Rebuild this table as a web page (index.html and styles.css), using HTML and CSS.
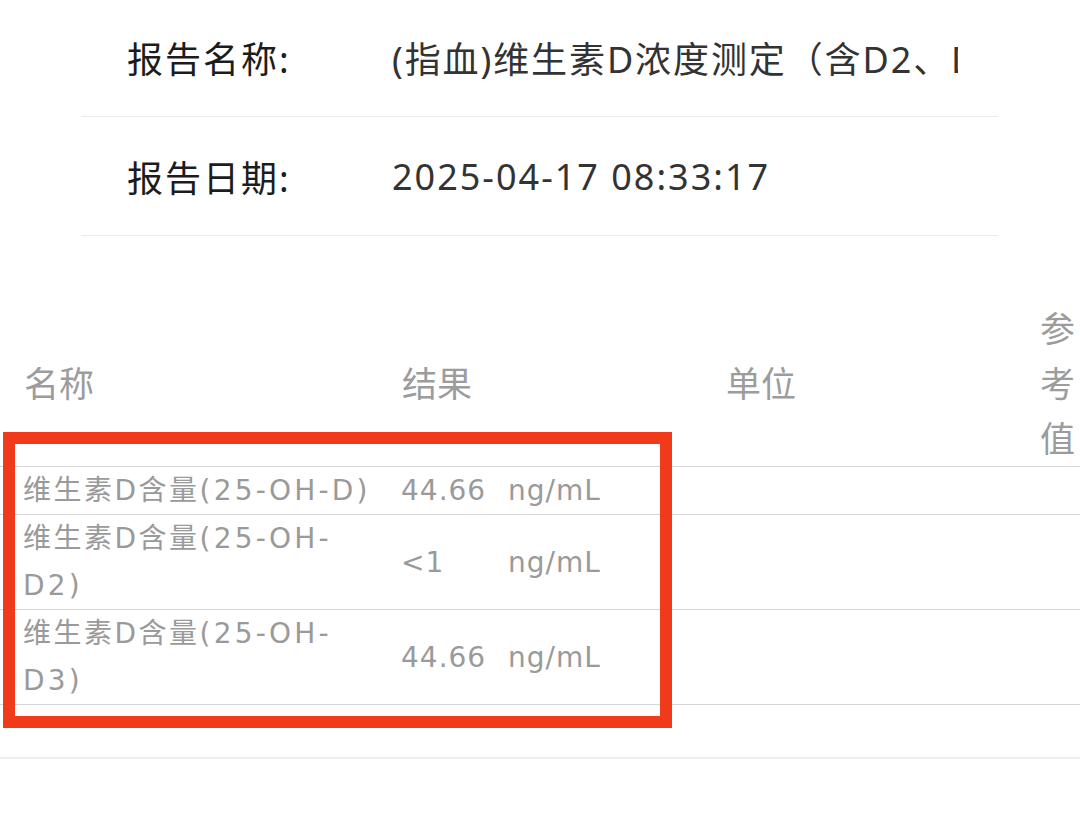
FILE: index.html
```html
<!DOCTYPE html>
<html lang="zh-CN">
<head>
<meta charset="utf-8">
<title>报告详情</title>
<link rel="stylesheet" href="styles.css">
</head>
<body>
<div class="page">
  <section class="info">
    <div class="info-row">
      <div class="label">报告名称:</div>
      <div class="value value-wide">(指血)维生素D浓度测定（含D2、D3）</div>
    </div>
    <div class="info-row">
      <div class="label">报告日期:</div>
      <div class="value">2025-04-17 08:33:17</div>
    </div>
  </section>

  <section class="table">
    <div class="thead">
      <div class="th">名称</div>
      <div class="th">结果</div>
      <div class="th">单位</div>
      <div class="th th-narrow">参考值</div>
    </div>
    <div class="tbody">
      <div class="tr">
        <div class="td td-name">维生素D含量<span class="code">(25-OH-D)</span></div>
        <div class="td td-num">44.66</div>
        <div class="td td-unit">ng/mL</div>
      </div>
      <div class="tr">
        <div class="td td-name">维生素D含量<span class="code">(25-OH-D2)</span></div>
        <div class="td td-num">&lt;1</div>
        <div class="td td-unit">ng/mL</div>
      </div>
      <div class="tr">
        <div class="td td-name">维生素D含量<span class="code">(25-OH-D3)</span></div>
        <div class="td td-num">44.66</div>
        <div class="td td-unit">ng/mL</div>
      </div>
    </div>
    <div class="tail"></div>
  </section>

  <div class="highlight"></div>
</div>
</body>
</html>
```

FILE: styles.css
```css
html, body {
  margin: 0;
  padding: 0;
  background: #ffffff;
}

body {
  font-family: "Noto Sans", "Noto Sans CJK SC", sans-serif;
  overflow: hidden;
}

.page {
  position: relative;
  width: 1080px;
}

/* ---------- top info ---------- */
.info {
  margin: -2px 82px 0 81px;
}

.info-row {
  display: flex;
  align-items: center;
  height: 118px;
  padding: 0 40px 0 46px;
  border-bottom: 1px solid #ececec;
  font-size: 36px;
  letter-spacing: 2px;
}

.label {
  flex: 0 0 265px;
  color: #1c1c1c;
  white-space: nowrap;
}

.value {
  flex: 1 1 auto;
  min-width: 0;
  overflow: hidden;
  white-space: nowrap;
  color: #333333;
}

.value-wide {
  letter-spacing: 1.9px;
}

/* ---------- table ---------- */
.table {
  margin-top: 65px;
}

.thead {
  display: grid;
  grid-template-columns: 378px 324px 314px 64px;
  align-items: center;
  border-bottom: 1px solid #d6d6d6;
  font-size: 35px;
  line-height: 55px;
  color: #9c9c9c;
}

.th {
  padding-left: 24px;
}

.th-narrow {
  word-break: break-all;
}

.tr {
  display: grid;
  grid-template-columns: 401px 107px 1fr;
  align-items: center;
  border-bottom: 1px solid #d6d6d6;
  font-family: "DejaVu Sans", "Noto Sans CJK SC", sans-serif;
  font-size: 28px;
  line-height: 47px;
  letter-spacing: 2.5px;
  color: #9a9a9a;
}

.td-name {
  padding-left: 23px;
  padding-right: 16px;
}

.code {
  letter-spacing: 3.2px;
}

.td-num,
.td-unit {
  letter-spacing: 1px;
}

.tail {
  height: 52px;
  border-bottom: 2px solid #efefef;
}

/* ---------- annotation box ---------- */
.highlight {
  position: absolute;
  left: 3px;
  top: 434px;
  width: 645px;
  height: 272px;
  border: 12px solid #f03a1a;
}
```
